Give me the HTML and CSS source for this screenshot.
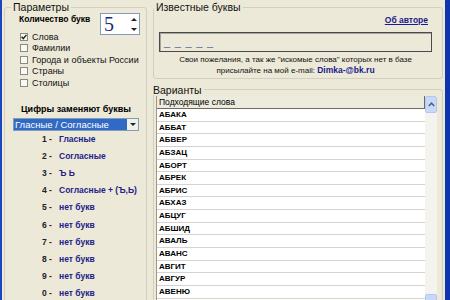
FILE: index.html
```html
<!DOCTYPE html>
<html lang="ru">
<head>
    <meta charset="UTF-8">
    <title>Подбор слов</title>
    <link rel="stylesheet" href="styles.css">
</head>
<body>
    <div class="window">
        <div class="left-panel">
            <fieldset class="group params">
                <legend>Параметры</legend>
                <div class="count-row">
                    <span class="count-label">Количество букв</span>
                    <div class="spin">
                        <span class="spin-value">5</span>
                        <div class="spin-buttons">
                            <span class="spin-btn up"></span>
                            <span class="spin-btn down"></span>
                        </div>
                    </div>
                </div>

                <ul class="checks">
                    <li><span class="check">
                        <svg width="6" height="6" viewBox="0 0 6 6"><polyline points="0.6,2.8 2.3,4.6 5.4,0.9" fill="none" stroke="#1d1d1d" stroke-width="1.4"/></svg>
                    </span>Слова</li>
                    <li><span class="check"></span>Фамилии</li>
                    <li><span class="check"></span>Города и объекты России</li>
                    <li><span class="check"></span>Страны</li>
                    <li><span class="check"></span>Столицы</li>
                </ul>

                <div class="digits-title">Цифры заменяют буквы</div>
                <div class="combo">
                    <span class="combo-text">Гласные / Согласные</span>
                    <span class="combo-btn"><span class="tri-down"></span></span>
                </div>

                <ul class="digits">
                    <li><span class="num">1 -</span><span class="val">Гласные</span></li>
                    <li><span class="num">2 -</span><span class="val">Согласные</span></li>
                    <li><span class="num">3 -</span><span class="val">Ъ Ь</span></li>
                    <li><span class="num">4 -</span><span class="val">Согласные + (Ъ,Ь)</span></li>
                    <li><span class="num">5 -</span><span class="val">нет букв</span></li>
                    <li><span class="num">6 -</span><span class="val">нет букв</span></li>
                    <li><span class="num">7 -</span><span class="val">нет букв</span></li>
                    <li><span class="num">8 -</span><span class="val">нет букв</span></li>
                    <li><span class="num">9 -</span><span class="val">нет букв</span></li>
                    <li><span class="num">0 -</span><span class="val">нет букв</span></li>
                </ul>
            </fieldset>
        </div>

        <div class="right-panel">
            <fieldset class="group known">
                <legend>Известные буквы</legend>
                <div class="about-row"><a class="about" href="#">Об авторе</a></div>
                <div class="letters-box"><span class="letters">_ _ _ _ _</span></div>
                <p class="info">Свои пожелания, а так же "искомые слова" которых нет в базе</p>
                <p class="info">присылайте на мой e-mail: <b class="mail">Dimka-@bk.ru</b></p>
            </fieldset>

            <fieldset class="group variants">
                <legend>Варианты</legend>
                <div class="list-wrap">
                    <div class="listview">
                        <div class="list-header">Подходящие слова</div>
                        <div class="row">АБАКА</div>
                        <div class="row">АББАТ</div>
                        <div class="row">АБВЕР</div>
                        <div class="row">АБЗАЦ</div>
                        <div class="row">АБОРТ</div>
                        <div class="row">АБРЕК</div>
                        <div class="row">АБРИС</div>
                        <div class="row">АБХАЗ</div>
                        <div class="row">АБЦУГ</div>
                        <div class="row">АБШИД</div>
                        <div class="row">АВАЛЬ</div>
                        <div class="row">АВАНС</div>
                        <div class="row">АВГИТ</div>
                        <div class="row">АВГУР</div>
                        <div class="row">АВЕНЮ</div>
                    </div>
                    <div class="scrollbar">
                        <span class="scroll-btn">
                            <svg width="7" height="5" viewBox="0 0 7 5"><polyline points="0.8,4 3.5,1.2 6.2,4" fill="none" stroke="#4d6185" stroke-width="1.5"/></svg>
                        </span>
                        <span class="scroll-track"></span>
                        <span class="scroll-btn">
                            <svg width="7" height="5" viewBox="0 0 7 5"><polyline points="0.8,1 3.5,3.8 6.2,1" fill="none" stroke="#4d6185" stroke-width="1.5"/></svg>
                        </span>
                    </div>
                </div>
            </fieldset>
        </div>
    </div>
</body>
</html>
```

FILE: styles.css
```css
* {
    margin: 0;
    padding: 0;
    box-sizing: border-box;
}

body {
    width: 450px;
    height: 300px;
    overflow: hidden;
    background-color: #ECE9D8;
    color: #000;
    font-family: "Liberation Sans", Arial, sans-serif;
}

.window {
    display: flex;
    height: 300px;
    padding-top: 2px;
    border-left: 2px solid #1a46c0;
    border-right: 5px solid #0d35b0;
    overflow: hidden;
}

/* Group boxes */
.group {
    border: 1px solid #D0D0BF;
    border-radius: 3px;
}

.group legend {
    font-size: 10.5px;
    line-height: 10px;
    padding: 0 2px;
    color: #111;
}

/* Left panel */
.left-panel {
    width: 145px;
    padding-left: 2px;
    flex-shrink: 0;
}

.params {
    height: 320px;
    padding: 1px 7px 0 14px;
}

.params legend {
    margin-left: -8px;
}

.count-row {
    display: flex;
    justify-content: space-between;
    align-items: flex-start;
    height: 18px;
    margin-right: -1px;
}

.count-label {
    font-size: 8.5px;
    font-weight: bold;
    line-height: 10px;
    margin-top: 1px;
}

.spin {
    display: flex;
    width: 40px;
    height: 22px;
    background-color: #fff;
    border: 1px solid #7F9DB9;
    position: relative;
    z-index: 1;
}

.spin-value {
    flex: 1;
    padding-left: 3px;
    font-family: "Liberation Serif", "Times New Roman", serif;
    font-size: 20px;
    line-height: 20px;
    color: #1e2a78;
}

.spin-buttons {
    width: 10px;
    display: flex;
    flex-direction: column;
}

.spin-btn {
    flex: 1;
    display: flex;
    align-items: center;
    justify-content: center;
}

.spin-btn.up:before {
    content: "";
    border-left: 3px solid transparent;
    border-right: 3px solid transparent;
    border-bottom: 3px solid #222;
}

.spin-btn.down:before {
    content: "";
    border-left: 3px solid transparent;
    border-right: 3px solid transparent;
    border-top: 3px solid #222;
}

.checks {
    list-style: none;
}

.checks li {
    display: flex;
    align-items: center;
    height: 11.5px;
    font-size: 9px;
    color: #111;
}

.check {
    width: 8px;
    height: 8px;
    margin: 0 4px 0 1px;
    border: 1px solid #8a8a80;
    background-color: #f8f8f4;
    display: flex;
    align-items: center;
    justify-content: center;
}

.digits-title {
    margin: 15px 0 0 -6px;
    text-align: center;
    font-size: 9px;
    font-weight: bold;
    line-height: 10px;
}

.combo {
    display: flex;
    height: 13px;
    margin: 4px 0 0 -6px;
    border: 1px solid #7F9DB9;
    background-color: #fff;
}

.combo-text {
    flex: 1;
    padding-left: 1px;
    background-color: #316AC5;
    color: #fff;
    font-size: 9.5px;
    line-height: 11px;
}

.combo-btn {
    width: 11px;
    display: flex;
    align-items: center;
    justify-content: center;
    background-color: #f1f1ec;
}

.tri-down {
    border-left: 3px solid transparent;
    border-right: 3px solid transparent;
    border-top: 3px solid #222;
}

.digits {
    list-style: none;
    padding-left: 23px;
}

.digits li {
    display: flex;
    align-items: center;
    height: 17.1px;
    font-size: 8.5px;
    font-weight: bold;
}

.num {
    width: 17px;
    color: #222;
}

.val {
    color: #22228a;
}

/* Right panel */
.right-panel {
    flex: 1;
    padding: 0 2px 0 6px;
}

.known {
    padding: 1px 10px 2px 5px;
}

.known legend,
.variants legend {
    margin-left: -5px;
}

.about-row {
    text-align: right;
    padding-right: 4px;
    line-height: 10px;
}

.about {
    font-size: 8.5px;
    font-weight: bold;
    color: #1b1b8c;
}

.letters-box {
    height: 20px;
    margin-top: 7px;
    padding: 0 0 3px 4px;
    border: 1px solid #4a4a4a;
    box-shadow: inset 1px 1px 0 #a8a698;
    display: flex;
    align-items: flex-end;
}

.letters {
    font-size: 11px;
    line-height: 11px;
    letter-spacing: 0.8px;
    color: #5566a8;
}

.info {
    font-size: 8px;
    line-height: 11px;
    text-align: center;
    color: #111;
}

.info:first-of-type {
    margin-top: 1.5px;
}

.mail {
    color: #1b1b8c;
    font-size: 8.5px;
}

.variants {
    margin-top: 6px;
    height: 230px;
    padding: 1.5px 5px 0 2px;
}

.list-wrap {
    display: flex;
    height: 215px;
}

.listview {
    flex: 1;
    background-color: #fff;
    border-left: 1px solid #9a9888;
}

.list-header {
    height: 13px;
    padding-left: 2px;
    background-color: #ECEBDD;
    border-bottom: 1px solid #6e6c61;
    border-right: 1px solid #6e6c61;
    font-size: 8.5px;
    line-height: 12px;
}

.row {
    height: 12.65px;
    padding-left: 2px;
    border-bottom: 1px solid #d6d3ce;
    font-size: 8px;
    font-weight: bold;
    line-height: 11.65px;
}

.scrollbar {
    width: 12px;
    display: flex;
    flex-direction: column;
    background-color: #f4f3ee;
}

.scroll-btn {
    height: 17px;
    display: flex;
    align-items: center;
    justify-content: center;
    background-color: #c9d8f8;
    border: 1px solid #b4c7ef;
    border-radius: 2px;
}

.scroll-track {
    flex: 1;
}
```
